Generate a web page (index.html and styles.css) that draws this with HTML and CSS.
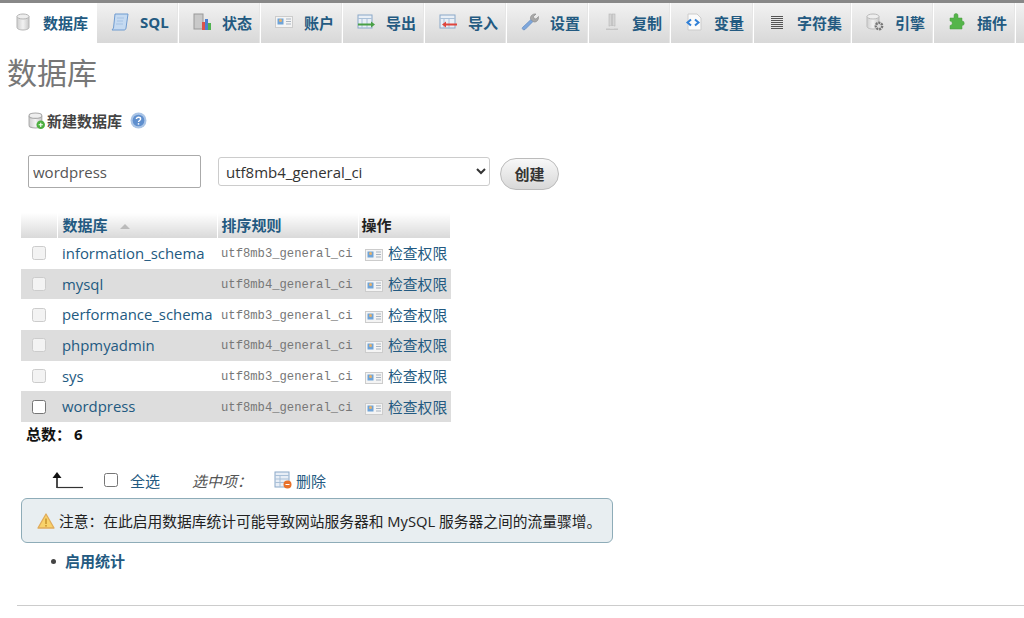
FILE: index.html
```html
<!DOCTYPE html>
<html lang="zh">
<head>
<meta charset="utf-8">
<title>数据库</title>
<link rel="stylesheet" href="styles.css">
</head>
<body>
<svg class="defs" width="0" height="0" aria-hidden="true">
  <defs>
    <symbol id="card" viewBox="0 0 18 14">
      <rect x=".5" y="1.5" width="17" height="11" fill="#f4f4f4" stroke="#ccc"/>
      <rect x="2.5" y="3.5" width="6" height="6" fill="#6ea3d8"/>
      <circle cx="5.5" cy="5.6" r="1.5" fill="#e8b26a"/>
      <path d="M11 4h5M11 6.500h5M11 9h5" stroke="#a9b4c0"/>
    </symbol>
    <linearGradient id="dbfill" x1="0" x2="1" y1="0" y2="0">
      <stop offset="0" stop-color="#cfcfcf"/><stop offset=".5" stop-color="#f2f2f2"/><stop offset="1" stop-color="#c8c8c8"/>
    </linearGradient>
  </defs>
</svg>
<nav class="tabs">
  <a class="tab active" style="width:97px"><svg class="ti" viewBox="0 0 18 18"><path d="M3 3.500v11c0 1.400 2.700 2.500 6 2.500s6-1.100 6-2.500v-11" fill="url(#dbfill)" stroke="#b5b5b5"/><ellipse cx="9" cy="3.500" rx="6" ry="2.500" fill="#eee" stroke="#b5b5b5"/></svg><span>数据库</span></a>
  <a class="tab" style="width:82px"><svg class="ti" viewBox="0 0 18 18"><path d="M4 1h13l-2 14c-.2 1.500-1 2-2 2H1l1.500-2z" fill="#c5daf1" stroke="#6f9bd0"/><path d="M6 5h7M6 8h6M5 11h7" stroke="#a5c2e4"/></svg><span>SQL</span></a>
  <a class="tab" style="width:82px"><svg class="ti" viewBox="0 0 18 18"><rect x="1" y="1" width="9" height="15" fill="#c9c9c9" stroke="#999"/><rect x="9" y="9" width="3" height="8" fill="#d9534a"/><rect x="12" y="6" width="3" height="11" fill="#4a7fd0"/><rect x="15" y="10" width="3" height="7" fill="#4fb24f"/></svg><span>状态</span></a>
  <a class="tab" style="width:82px"><svg class="ti" viewBox="0 0 18 14"><use href="#card"/></svg><span>账户</span></a>
  <a class="tab" style="width:82px"><svg class="ti" viewBox="0 0 18 16"><rect x="1" y="1" width="14" height="13" fill="#e9eff6" stroke="#8aa8c8"/><path d="M1 4.500h14M5 4.500V14M10 4.500V14" stroke="#a9c0d8"/><path d="M1 9.500h13v-2l4 3-4 3v-2H1z" fill="#49a045"/></svg><span>导出</span></a>
  <a class="tab" style="width:82px"><svg class="ti" viewBox="0 0 18 16"><rect x="1" y="1" width="15" height="13" fill="#e9eff6" stroke="#8aa8c8"/><path d="M1 4.500h15M5 4.500V14M10 4.500V14" stroke="#a9c0d8"/><path d="M18 9.500H7v-2l-4 3 4 3v-2h11z" fill="#e0453c"/></svg><span>导入</span></a>
  <a class="tab" style="width:82px"><svg class="ti" viewBox="0 0 18 18"><path d="M1.500 14.500 10 6.500l2 2-8 8c-1.500 1-3.500-.5-2.500-2z" fill="#7ea7dc" stroke="#5d86bd" stroke-width=".7"/><path d="M9.500 6c-.5-3 2-5.500 5.500-5l-2.500 2.500.5 2 2 .5L17.500 3.500c.5 3.500-2 6-5 5.500z" fill="#a8a8a8" stroke="#888" stroke-width=".6"/></svg><span>设置</span></a>
  <a class="tab" style="width:82px"><svg class="ti" viewBox="0 0 16 18"><rect x="5" y="1" width="2.500" height="12" fill="#d5d5d5" stroke="#b5b5b5" stroke-width=".6"/><rect x="8.500" y="1" width="2.500" height="12" fill="#d5d5d5" stroke="#b5b5b5" stroke-width=".6"/><path d="M2 15.500h12v1.500H2z" fill="#c5c5c5"/><path d="M6 13h4v2.500H6z" fill="#e0e0e0"/></svg><span>复制</span></a>
  <a class="tab" style="width:83px"><svg class="ti" viewBox="0 0 18 18"><path d="M3 1h9l4 4v12H3z" fill="#fafafa" stroke="#ccc"/><path d="M6 6.500 2.500 9.500 6 12.500M10 6.500l3.500 3-3.500 3" fill="none" stroke="#2f7fd6" stroke-width="2"/></svg><span>变量</span></a>
  <a class="tab" style="width:98px"><svg class="ti tis" viewBox="0 0 14 14"><path d="M1 1.500h12M1 3.500h12M1 5.500h12M1 7.500h12M1 9.500h12M1 11.500h12M1 13.500h12" stroke="#555"/></svg><span>字符集</span></a>
  <a class="tab" style="width:82px"><svg class="ti" viewBox="0 0 18 18"><path d="M1 3.500v10c0 1.400 2.700 2.500 6 2.500s6-1.100 6-2.500v-10" fill="url(#dbfill)" stroke="#bbb"/><ellipse cx="7" cy="3.500" rx="6" ry="2.500" fill="#eee" stroke="#bbb"/><circle cx="13" cy="13" r="3.200" fill="#ddd" stroke="#777" stroke-width="2.400" stroke-dasharray="2 .8"/></svg><span>引擎</span></a>
  <a class="tab" style="width:82px"><svg class="ti" viewBox="0 0 18 18"><path d="M6 2.500a2 2 0 0 1 4 0V5h4v3a2.200 2.200 0 0 1 0 4.500V16H2v-3.500a2.200 2.200 0 0 0 0-4.500V5h4z" fill="#55b54a" stroke="#4a9a42" stroke-width=".5"/></svg><span>插件</span></a>
  <span class="tab-rest"></span>
</nav>

<main class="page">
  <h1 class="title">数据库</h1>

  <h2 class="new-db">
    <svg class="new-db-icon" viewBox="0 0 16 16"><path d="M1 3.500v9c0 1.400 2.700 2.500 6 2.500s6-1.100 6-2.500v-9" fill="url(#dbfill)" stroke="#aaa"/><ellipse cx="7" cy="3.500" rx="6" ry="2.500" fill="#eee" stroke="#aaa"/><circle cx="12" cy="12" r="4" fill="#4caf3f"/><path d="M10 12h4M12 10v4" stroke="#fff"/></svg>
    <span>新建数据库</span>
    <svg class="help" viewBox="0 0 16 16"><circle cx="8" cy="8" r="7.500" fill="#a9c4e6"/><circle cx="8" cy="8" r="5.500" fill="#5f8fce"/><path d="M6 6.500C6 4.500 10 4.500 10 6.500 10 8 8 8 8 9.500" fill="none" stroke="#fff" stroke-width="1.300"/><rect x="7.300" y="10.500" width="1.400" height="1.400" fill="#fff"/></svg>
  </h2>

  <form class="create-form">
    <input class="db-name" type="text" value="wordpress">
    <select class="collation-select"><option>utf8mb4_general_ci</option></select>
    <button class="create-btn" type="button">创建</button>
  </form>

  <table class="db-table">
    <thead>
      <tr><th class="c-check"></th><th class="c-name"><a>数据库</a><i class="sort"></i></th><th class="c-coll"><a>排序规则</a></th><th class="c-act">操作</th></tr>
    </thead>
    <tbody>
      <tr><td class="c-check"><input class="cb cb-dim" type="checkbox"></td><td><a>information_schema</a></td><td class="mono">utf8mb3_general_ci</td><td class="act"><svg class="card"><use href="#card"/></svg><a>检查权限</a></td></tr>
      <tr><td class="c-check"><input class="cb cb-dim" type="checkbox"></td><td><a>mysql</a></td><td class="mono">utf8mb4_general_ci</td><td class="act"><svg class="card"><use href="#card"/></svg><a>检查权限</a></td></tr>
      <tr><td class="c-check"><input class="cb cb-dim" type="checkbox"></td><td><a>performance_schema</a></td><td class="mono">utf8mb3_general_ci</td><td class="act"><svg class="card"><use href="#card"/></svg><a>检查权限</a></td></tr>
      <tr><td class="c-check"><input class="cb cb-dim" type="checkbox"></td><td><a>phpmyadmin</a></td><td class="mono">utf8mb4_general_ci</td><td class="act"><svg class="card"><use href="#card"/></svg><a>检查权限</a></td></tr>
      <tr><td class="c-check"><input class="cb cb-dim" type="checkbox"></td><td><a>sys</a></td><td class="mono">utf8mb3_general_ci</td><td class="act"><svg class="card"><use href="#card"/></svg><a>检查权限</a></td></tr>
      <tr><td class="c-check"><input class="cb" type="checkbox"></td><td><a>wordpress</a></td><td class="mono">utf8mb4_general_ci</td><td class="act"><svg class="card"><use href="#card"/></svg><a>检查权限</a></td></tr>
    </tbody>
  </table>

  <p class="total"><b>总数：</b><b class="total-n">6</b></p>

  <div class="bulk">
    <svg class="arrow" viewBox="0 0 32 18"><path d="M6 17V3" stroke="#111" stroke-width="1.500"/><path d="M1.500 7 6 1l4.500 6z" fill="#111"/><path d="M6 16.500h26" stroke="#333" stroke-width="1.200"/></svg>
    <input class="cb" type="checkbox">
    <a class="all">全选</a>
    <em class="with">选中项：</em>
    <svg class="del-icon" viewBox="0 0 18 18"><rect x="1" y="1" width="14" height="15" fill="#e8eef6" stroke="#8aa8c8"/><path d="M1 4.500h14M1 8h14M1 11.500h14M6 4.500V16" stroke="#a9c0d8"/><circle cx="13.500" cy="13.500" r="4" fill="#e8702a"/><path d="M11.500 13.500h4" stroke="#fff"/></svg>
    <a class="del">删除</a>
  </div>

  <div class="notice">
    <svg class="warn" viewBox="0 0 18 16"><path d="M9 1 17 15H1z" fill="#f8d26a" stroke="#e0ab5b" stroke-width="1.300" stroke-linejoin="round"/><path d="M9 5.500v5.500" stroke="#c9962f" stroke-width="1.600"/><rect x="8.200" y="12" width="1.600" height="1.600" fill="#c9962f"/></svg>
    <span>注意：在此启用数据库统计可能导致网站服务器和 MySQL 服务器之间的流量骤增。</span>
  </div>

  <ul class="links"><li><a>启用统计</a></li></ul>

  <hr class="rule">
</main>
</body>
</html>
```
FILE: styles.css
```css
* { box-sizing: border-box; }
html, body { margin: 0; padding: 0; height: 618px; overflow: hidden; }
body {
  background: #fff;
  color: #444;
  font-family: "Open Sans", "Noto Sans CJK SC", sans-serif;
  font-size: 15px;
  border-top: 3px solid #888;
}
a { color: #235a81; text-decoration: none; }
.defs { position: absolute; }

.tabs { display: flex; height: 40px; }
.tab {
  display: flex;
  align-items: center;
  gap: 11px;
  padding: 0 0 2px 14px;
  height: 40px;
  font-size: 15px;
  font-weight: 700;
  color: #235a81;
  background: linear-gradient(#f2f2f2, #d8d8d8);
  border-right: 1px solid #fff;
  box-shadow: inset -1px 0 0 #e6e6e6;
}
.tab.active { background: #fff; border-right: 0; box-shadow: none; }
.tab-rest { flex: 1; background: linear-gradient(#f2f2f2, #d8d8d8); }
.ti { width: 18px; height: 18px; flex: none; }
.tis { width: 14px; height: 14px; margin: 0 2px; }

.page { padding: 0 0 0 21px; }
.title {
  margin: 10px 0 0 -14px;
  font-size: 30px;
  font-weight: 400;
  line-height: 40px;
  height: 40px;
  color: #777;
}
.new-db {
  display: flex;
  align-items: center;
  margin: 17px 0 0 7px;
  height: 20px;
  font-size: 15px;
  font-weight: 700;
  color: #444;
}
.new-db-icon { width: 17px; height: 17px; margin-right: 2px; }
.help { width: 17px; height: 17px; margin-left: 8px; }

.create-form { display: flex; align-items: flex-start; margin: 25px 0 0 7px; height: 35px; }
.db-name {
  width: 173px;
  height: 33px;
  padding: 0 4px;
  border: 1px solid #aaa;
  border-radius: 2px;
  font: 15px "Open Sans", sans-serif;
  color: #555;
}
.collation-select {
  width: 272px;
  height: 29px;
  margin: 2px 0 0 17px;
  padding-left: 3px;
  border: 1px solid #ccc;
  border-radius: 3px;
  background: #fff;
  font: 15px "Open Sans", sans-serif;
  color: #333;
}
.create-btn {
  width: 59px;
  height: 32px;
  margin: 3px 0 0 10px;
  padding-bottom: 3px;
  border: 1px solid #bbb;
  border-radius: 16px;
  background: linear-gradient(#f8f8f8, #d8d8d8);
  font: 700 15px "Noto Sans CJK SC", sans-serif;
  color: #333;
}

.db-table { width: 430px; margin-top: 23px; border-collapse: collapse; table-layout: fixed; }
.db-table th {
  height: 25px;
  padding: 0 4px 3px 5px;
  text-align: left;
  font-size: 15px;
  font-weight: 700;
  color: #222;
  background: linear-gradient(#fff, #d9d9d9);
  border-right: 1px solid #fff;
}
.db-table th.c-coll { padding-left: 4px; }
.db-table th.c-act { padding-left: 3px; }
.db-table th a { color: #235a81; }
.c-check { width: 36px; }
.c-name { width: 160px; }
.c-coll { width: 141px; }
.db-table td { height: 30.700px; padding: 0 0 1px 5px; white-space: nowrap; font-size: 14.900px; }
.db-table tbody tr:nth-child(even) { background: #ddd; }
.db-table td.c-check { padding-left: 11px; padding-bottom: 0; }
.sort {
  display: inline-block;
  margin-left: 12px;
  border: 5px solid transparent;
  border-top: 0;
  border-bottom: 5px solid #bbb;
  vertical-align: 2px;
}
.db-table td.mono { padding: 2px 0 0 4px; font: 12.200px "Liberation Mono", monospace; color: #777; }
.cb {
  appearance: none;
  display: block;
  width: 14px;
  height: 14px;
  margin: 0;
  background: #fff;
  border: 1px solid #767676;
  border-radius: 2.500px;
}
.cb-dim { background: #f3f3f3; border-color: #ccc; }
.db-table td.act { padding-left: 7px; }
.act a { font-size: 14.800px; }
.card { width: 18px; height: 14px; margin-right: 5px; vertical-align: -3px; }

.total { margin: 0 0 0 5px; height: 24px; line-height: 24px; font-size: 15px; color: #111; }
.total-n { margin-left: 3px; }

.bulk { display: flex; align-items: center; margin: 22px 0 0 30px; height: 24px; }
.arrow { width: 32px; height: 18px; }
.bulk .cb { margin-left: 21px; }
.all { margin-left: 12px; font-size: 15px; }
.with { margin-left: 32px; font-size: 15px; color: #555; }
.del-icon { width: 18px; height: 18px; margin-left: 22px; }
.del { margin-left: 4px; font-size: 15px; }

.notice {
  display: flex;
  align-items: center;
  width: 592px;
  height: 45px;
  margin-top: 6px;
  padding-left: 15px;
  background: #e8eef1;
  border: 1px solid #8eacb8;
  border-radius: 6px;
  font-size: 14.750px;
  color: #222;
}
.warn { width: 18px; height: 16px; margin-right: 4px; }
.links { margin: 6px 0 0; padding: 0 0 0 30px; list-style: none; font-size: 15px; font-weight: 700; line-height: 24px; }
.links li { display: flex; align-items: center; gap: 9px; }
.links li::before { content: ""; width: 5px; height: 5px; border-radius: 50%; background: #444; }
.rule { width: 1007px; margin: 32px 0 0 -4px; border: 0; border-top: 1px solid #ccc; }
```
